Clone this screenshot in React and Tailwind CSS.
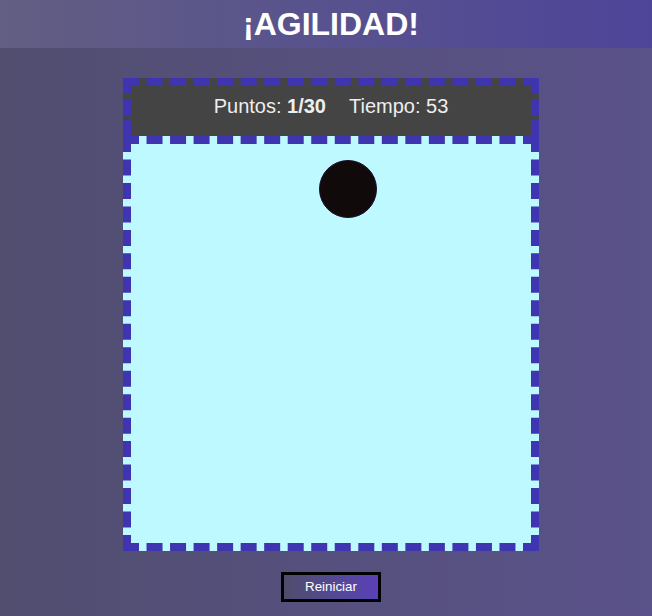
export default function App() {
  return (
    <div
      className="min-h-screen w-full bg-gradient-to-r from-[#514e70] to-[#5a528a] text-white"
      style={{ fontFamily: '"Liberation Sans", Arial, sans-serif' }}
    >
      {/* Cabecera */}
      <header className="h-12 pl-[10px] flex items-center justify-center bg-gradient-to-r from-[#635e82] to-[#4e4499]">
        <h1 className="text-[32px] font-bold leading-none">¡AGILIDAD!</h1>
      </header>

      <main className="flex flex-col items-center pt-[30px] pl-[10px]">
        {/* Marcador */}
        <div className="w-[416px] h-[58px] pt-[8px] border-8 border-b-0 border-dashed border-[#4035b0] bg-[#444444] flex items-start justify-center gap-[23px] text-[20px] leading-[24px] text-[#eeeeee]">
          <span>
            Puntos: <b>1/30</b>
          </span>
          <span>Tiempo: 53</span>
        </div>

        {/* Zona de juego */}
        <div className="relative w-[416px] h-[415px] border-8 border-dashed border-[#4035b0] bg-[#bdf9ff]">
          <div className="absolute left-[188px] top-[16px] w-[58px] h-[58px] rounded-full bg-[#110a0a] border border-[#1a1030]" />
        </div>

        <button className="mt-[21px] w-[100px] h-[30px] border-[3px] border-black bg-gradient-to-r from-[#4f4c6b] to-[#5a40b8] text-[13.33px] text-white">
          Reiniciar
        </button>
      </main>
    </div>
  );
}
